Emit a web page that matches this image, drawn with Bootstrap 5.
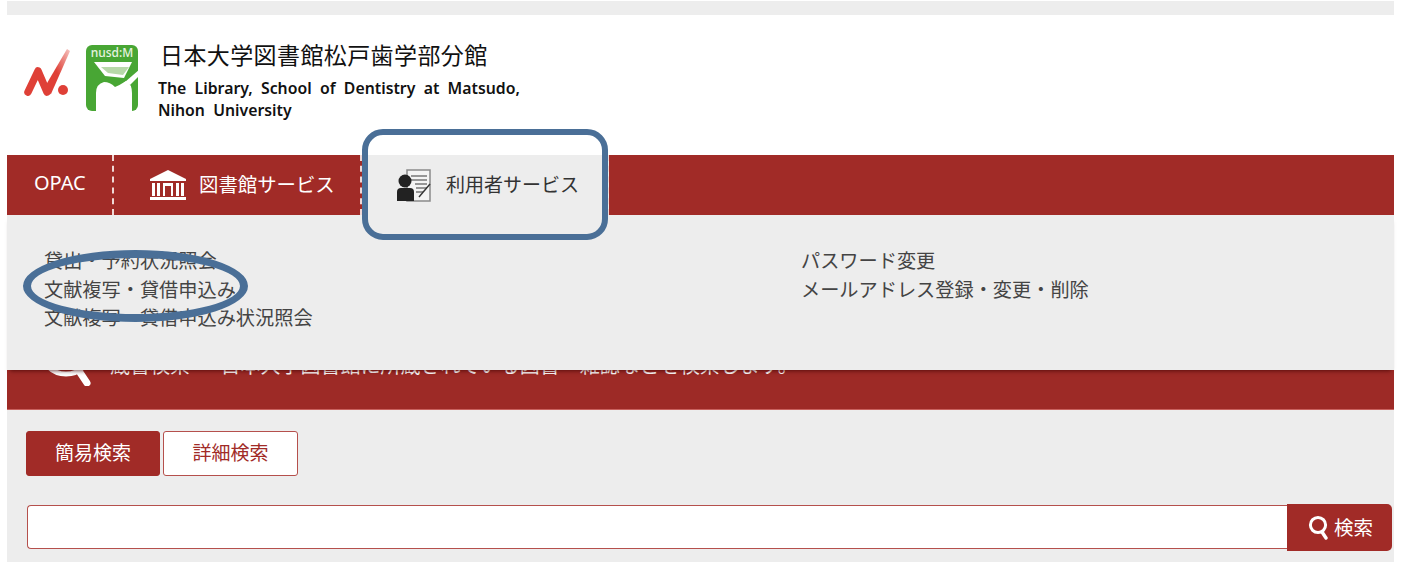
<!DOCTYPE html>
<html lang="ja">
<head>
  <meta charset="UTF-8" />
  <meta name="viewport" content="width=device-width, initial-scale=1.0" />
  <title>日本大学図書館松戸歯学部分館</title>
  <link href="https://cdn.jsdelivr.net/npm/bootstrap@5.3.3/dist/css/bootstrap.min.css" rel="stylesheet">
  <style>
    body {
      background: #fff;
      color: #333;
      font-family: "Noto Sans", "Noto Sans CJK JP", sans-serif;
      height: 568px;
      overflow: hidden;
    }
    .page-wrap { position: relative; width: 1387px; margin-left: 7px; padding-top: 1px; }
    .top-strip { height: 14px; background: #ededed; }
    .site-head { height: 140px; padding: 30px 0 0 17px; }
    .head-logos { width: 114px; height: 68px; flex: none; }
    .head-text { margin-left: 20px; margin-top: -5px; color: #111; }
    .head-ja { font-size: 23px; line-height: 30px; letter-spacing: .4px; margin: 0 0 0 2px; font-weight: 400; }
    .head-en { font-size: 15.8px; line-height: 22px; font-weight: 600; word-spacing: 4.2px; margin-top: 7px; white-space: nowrap; }
    .main-nav { height: 60px; background: #a12b27; }
    .nav-cell {
      height: 60px;
      color: #fff;
      text-decoration: none;
      font-size: 19.4px;
      border-right: 2px dashed #f0d8d6;
    }
    .nav-opac { width: 107px; padding: 0 0 5px 27px; font-size: 20px; }
    .nav-lib { width: 248px; padding: 0 0 0 35px; }
    .nav-user { width: 247px; padding: 0 0 0 34px; background: #ededed; color: #333; font-size: 19px; }
    .nav-lib svg { margin-right: 12px; }
    .nav-user svg { margin-right: 15px; }
    .search-band {
      height: 195px;
      background: #9d2a26;
      border-bottom: 1px solid #c9625e;
      color: #fff;
      padding: 0 0 23px 33px;
      font-size: 20px;
    }
    .search-band svg { margin-right: 14px; flex: none; }
    .band-text { margin-bottom: 5px; white-space: nowrap; }
    .drop-panel {
      position: absolute;
      left: 0;
      right: 0;
      top: 215px;
      height: 155px;
      background: #ededed;
      box-shadow: 0 4px 4px -3px rgba(60, 0, 0, .7);
      font-size: 19.2px;
      line-height: 28.5px;
      padding-top: 32px;
    }
    .drop-col-a { width: 794px; padding-left: 37px; }
    .drop-panel a { color: #444; text-decoration: none; display: block; white-space: nowrap; }
    .search-area { height: 152px; background: #ededed; padding: 21px 2px 0 19px; }
    .tab-btn {
      width: 134px;
      height: 45px;
      font-size: 19px;
      border: 1.5px solid #b5504c;
      border-radius: 3px;
      padding: 0;
      background: #a12b27;
      color: #fff;
    }
    .tab-on { border-color: #a12b27; }
    .tab-off { background: #fff; color: #a12b27; margin-left: 3px; width: 135px; }
    .search-row { margin-top: 29px; }
    .search-input {
      flex: 1;
      height: 44px;
      margin-left: 1px;
      border: 1.5px solid #b5504c;
      border-right: 0;
      border-radius: 4px 0 0 4px;
      background: #fff;
    }
    .search-btn {
      width: 105px;
      height: 47px;
      margin-top: -1px;
      background: #a12b27;
      color: #fff;
      border: 0;
      border-radius: 0 5px 5px 0;
      font-size: 19.5px;
      padding: 0 0 0 2px;
    }
    .search-btn svg { margin-right: 5px; vertical-align: -5px; }
    .note-rect {
      position: absolute;
      left: 355px;
      top: 129px;
      width: 246px;
      height: 111px;
      border: 6px solid #4a6f97;
      border-radius: 21px;
    }
    .note-oval {
      position: absolute;
      left: 16px;
      top: 250px;
      width: 225px;
      height: 72px;
      border: 8px solid #4a6f97;
      border-radius: 50%;
    }
  </style>
</head>
<body>
  <div class="page-wrap">
    <div class="top-strip"></div>

    <!-- ヘッダー -->
    <header class="site-head d-flex align-items-start">
      <svg class="head-logos" viewBox="0 0 114 68">
        <defs>
          <linearGradient id="slashFade" x1="0" y1="1" x2="1" y2="0">
            <stop offset="0.5" stop-color="#df4037" />
            <stop offset="1" stop-color="#f5c4c0" />
          </linearGradient>
        </defs>
        <path d="M4 47 L14 26 L23 47" fill="none" stroke="#df4037" stroke-width="7.5" stroke-linecap="round" stroke-linejoin="round" />
        <path d="M19 45 L43 4 L46 6 L27 49 Z" fill="url(#slashFade)" />
        <circle cx="39" cy="45" r="5" fill="#df4037" />
        <rect x="62" y="0" width="52" height="66" rx="6" fill="#48a634" />
        <text x="88" y="11.5" text-anchor="middle" fill="#e6f3e0" font-family="Noto Sans" font-size="12" font-weight="500">nusd:M</text>
        <path d="M70 17 H108 L100 33 L81 31 Z" fill="#fff" />
        <path d="M77 22 H105 L99 30 L84 28 Z" fill="#b7d9a9" />
        <path d="M72 66 V48 Q72 39 80 37 Q86 37 91 42 Q96 40 102 36 Q108 39 108 48 V66 Z" fill="#fff" />
        <path d="M101 37 L116 24 V30 L106 40 Z" fill="#fff" />
      </svg>
      <div class="head-text">
        <h1 class="head-ja">日本大学図書館松戸歯学部分館</h1>
        <div class="head-en">The Library, School of Dentistry at Matsudo,<br>Nihon University</div>
      </div>
    </header>

    <!-- メインメニュー -->
    <nav class="main-nav d-flex">
      <a class="nav-cell nav-opac d-flex align-items-center" href="#">OPAC</a>
      <a class="nav-cell nav-lib d-flex align-items-center" href="#">
        <svg width="38" height="30" viewBox="0 0 38 30" fill="#fff">
          <path d="M19 0 L37 9 V11 H1 V9 Z" />
          <path d="M3 13 h3 v13 h-3 z M8 13 h3 v13 h-3 z M14 16 h2 v10 h-2 z M22 16 h2 v10 h-2 z M14 13 h10 v3 h-10 z M27 13 h3 v13 h-3 z M32 13 h3 v13 h-3 z" />
          <rect x="1" y="27" width="36" height="3" />
        </svg>
        図書館サービス
      </a>
      <a class="nav-cell nav-user d-flex align-items-center" href="#">
        <svg width="35" height="33" viewBox="0 0 35 33">
          <rect x="11" y="1" width="23" height="31" fill="#f4f4f4" stroke="#8a8a8a" stroke-width="1.5" />
          <path d="M15 7 H31 M15 11 H31 M19 15 H31 M20 19 H31 M20 23 H27" stroke="#777" stroke-width="1.6" />
          <path d="M23 28 L34 15" stroke="#333" stroke-width="1.4" />
          <circle cx="9" cy="12" r="6.5" fill="#222" />
          <path d="M1 32 V23 Q1 19 5 19 H14 Q18 19 18 23 V32 Z" fill="#222" />
        </svg>
        利用者サービス
      </a>
    </nav>

    <!-- 検索案内(メニューの下に隠れる) -->
    <div class="search-band d-flex align-items-end">
      <svg width="56" height="44" viewBox="0 0 56 44">
        <circle cx="26" cy="7" r="25" fill="none" stroke="#fff" stroke-width="5" />
        <path d="M39 29 L47 41" stroke="#fff" stroke-width="7" stroke-linecap="round" />
      </svg>
      <span class="band-text">蔵書検索 ― 日本大学図書館に所蔵されている図書・雑誌などを検索します。</span>
    </div>

    <!-- 検索フォーム -->
    <div class="search-area">
      <div class="d-flex">
        <button type="button" class="tab-btn tab-on">簡易検索</button>
        <button type="button" class="tab-btn tab-off">詳細検索</button>
      </div>
      <div class="search-row d-flex">
        <input class="search-input" type="text" aria-label="検索">
        <button type="button" class="search-btn">
          <svg width="21" height="25" viewBox="0 0 21 25">
            <circle cx="10" cy="10" r="7.6" fill="none" stroke="#fff" stroke-width="3" />
            <path d="M14 17 L18 23" stroke="#fff" stroke-width="3.4" stroke-linecap="round" />
          </svg>検索
        </button>
      </div>
    </div>

    <!-- ドロップダウン -->
    <div class="drop-panel d-flex">
      <div class="drop-col-a">
        <a href="#">貸出・予約状況照会</a>
        <a href="#">文献複写・貸借申込み</a>
        <a href="#">文献複写・貸借申込み状況照会</a>
      </div>
      <div>
        <a href="#">パスワード変更</a>
        <a href="#">メールアドレス登録・変更・削除</a>
      </div>
    </div>

    <!-- 注記の枠 -->
    <div class="note-rect"></div>
    <div class="note-oval"></div>
  </div>

  <script src="https://cdn.jsdelivr.net/npm/bootstrap@5.3.3/dist/js/bootstrap.bundle.min.js"></script>
</body>
</html>
